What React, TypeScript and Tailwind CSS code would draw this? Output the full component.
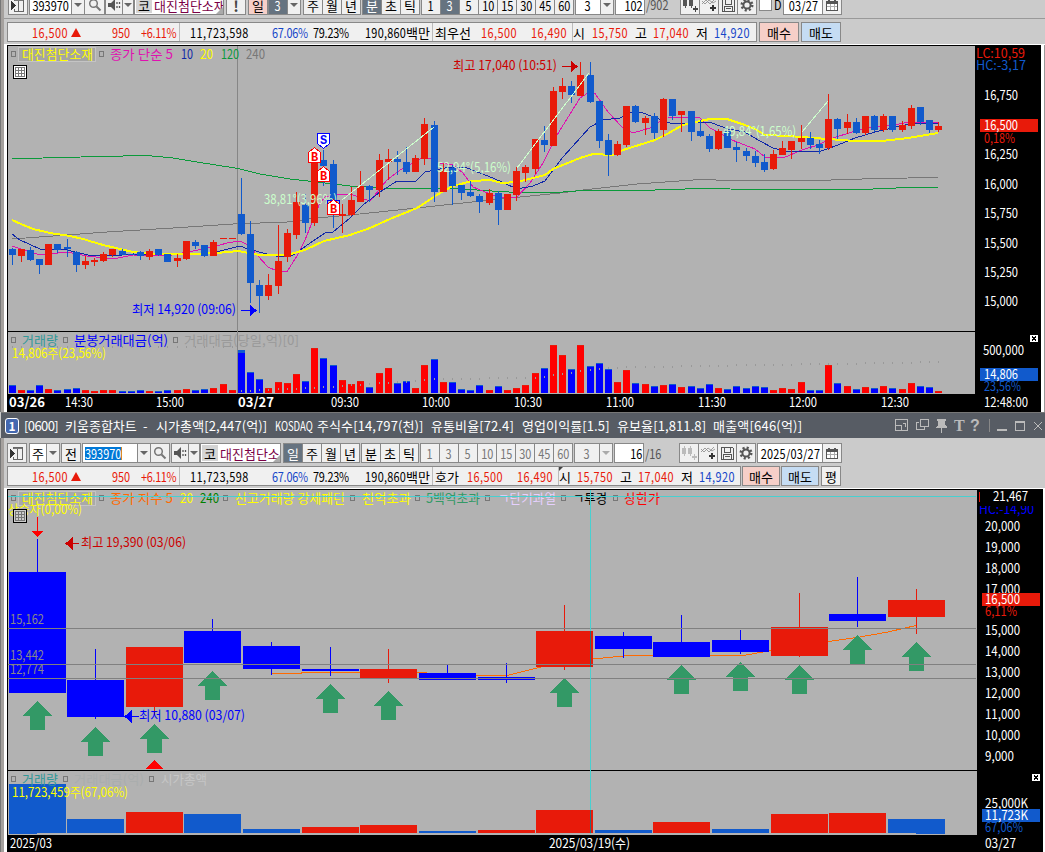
import type { ReactNode } from 'react';

type Tone = 'r' | 'b';
// x, high, open/close top, open/close bottom, low, tone, volume top
type Candle = [number, number, number, number, number, Tone, number];

const UP = '#e81a0a';
const DOWN = '#115acc';
const FONT = '"Noto Sans CJK KR", sans-serif';

const minuteCandles: Candle[] = [
  [9, 248, 249, 255, 265, 'b', 385], [18, 249, 249, 256, 262, 'r', 390], [27, 247, 250, 260, 261, 'b', 390],
  [36, 259, 259, 265, 274, 'b', 385], [45, 244, 244, 265, 265, 'r', 389], [54, 244, 244, 250, 253, 'b', 390],
  [64, 239, 247, 249, 257, 'b', 389], [73, 251, 252, 265, 272, 'b', 388], [82, 256, 261, 265, 269, 'r', 390],
  [91, 258, 260, 262, 266, 'r', 391], [100, 252, 254, 261, 262, 'r', 390], [109, 249, 249, 255, 257, 'r', 390],
  [119, 249, 251, 255, 255, 'b', 391], [128, 254, 254, 255, 255, 'b', 391], [137, 251, 252, 256, 260, 'b', 390],
  [146, 249, 251, 257, 260, 'r', 391], [155, 249, 249, 255, 256, 'b', 391], [164, 254, 254, 262, 262, 'b', 390],
  [174, 254, 258, 261, 267, 'r', 390], [183, 241, 241, 259, 260, 'r', 389], [192, 240, 242, 246, 249, 'b', 390],
  [201, 245, 245, 256, 257, 'b', 389], [210, 240, 242, 256, 256, 'r', 388], [220, 238, 238, 239, 239, 'r', 384],
  [229, 238, 238, 239, 239, 'r', 390], [238, 178, 214, 234, 235, 'b', 350], [247, 221, 234, 283, 303, 'b', 372],
  [256, 280, 285, 296, 313, 'b', 379], [265, 274, 285, 296, 300, 'r', 388], [275, 225, 261, 286, 294, 'r', 382],
  [284, 229, 233, 257, 262, 'r', 383], [293, 192, 202, 235, 239, 'r', 374], [302, 194, 205, 223, 233, 'b', 381],
  [311, 162, 162, 223, 226, 'r', 348], [320, 150, 160, 166, 186, 'b', 358], [330, 160, 164, 215, 228, 'b', 365],
  [339, 204, 214, 216, 233, 'r', 380], [348, 187, 200, 215, 216, 'r', 384], [357, 171, 186, 202, 202, 'r', 381],
  [366, 185, 186, 190, 202, 'b', 387], [376, 154, 160, 190, 197, 'r', 373], [385, 149, 159, 162, 180, 'r', 368],
  [394, 151, 159, 162, 175, 'b', 383], [403, 147, 162, 172, 174, 'b', 381], [412, 155, 158, 172, 172, 'r', 388],
  [421, 118, 124, 159, 165, 'r', 365], [431, 121, 125, 192, 202, 'b', 359], [440, 163, 171, 192, 192, 'r', 382],
  [449, 165, 168, 186, 205, 'b', 382], [458, 185, 185, 193, 200, 'b', 389], [467, 181, 192, 196, 197, 'b', 390],
  [476, 194, 196, 202, 213, 'b', 385], [486, 189, 193, 203, 205, 'r', 390], [495, 191, 193, 210, 225, 'b', 386],
  [504, 194, 194, 210, 210, 'r', 390], [513, 167, 171, 195, 201, 'r', 388], [522, 165, 167, 173, 182, 'r', 385],
  [532, 139, 139, 169, 174, 'r', 373], [541, 126, 140, 145, 152, 'b', 368], [550, 87, 91, 146, 146, 'r', 345],
  [559, 78, 86, 92, 99, 'r', 355], [568, 81, 86, 95, 103, 'b', 369], [577, 62, 75, 96, 96, 'r', 345],
  [587, 62, 75, 102, 103, 'b', 366], [596, 101, 101, 141, 148, 'b', 363], [605, 134, 140, 155, 176, 'b', 369],
  [614, 141, 144, 155, 156, 'r', 382], [623, 106, 106, 145, 147, 'r', 370], [632, 105, 106, 122, 123, 'b', 383],
  [642, 116, 118, 123, 135, 'r', 384], [651, 113, 116, 133, 139, 'b', 386], [660, 98, 99, 130, 137, 'r', 385],
  [669, 99, 99, 116, 120, 'b', 384], [678, 111, 111, 115, 132, 'r', 387], [688, 111, 111, 132, 141, 'b', 386],
  [697, 120, 131, 136, 137, 'b', 388], [706, 134, 136, 149, 152, 'b', 384], [715, 129, 131, 149, 150, 'r', 388],
  [724, 131, 131, 148, 148, 'b', 389], [733, 142, 147, 150, 162, 'b', 386], [743, 148, 151, 156, 161, 'b', 388],
  [752, 151, 156, 163, 167, 'b', 386], [761, 154, 162, 170, 172, 'b', 387], [770, 150, 154, 169, 170, 'r', 390],
  [779, 141, 148, 155, 155, 'r', 388], [788, 141, 141, 150, 159, 'r', 389], [798, 125, 138, 142, 149, 'r', 382],
  [807, 132, 138, 145, 149, 'b', 390], [816, 140, 144, 148, 154, 'b', 390], [825, 94, 119, 148, 150, 'r', 365],
  [834, 118, 119, 129, 139, 'b', 383], [844, 114, 122, 128, 134, 'r', 386], [853, 118, 122, 133, 134, 'b', 389],
  [862, 116, 116, 133, 135, 'r', 387], [871, 115, 116, 130, 132, 'b', 388], [880, 114, 116, 130, 132, 'r', 386],
  [889, 116, 116, 130, 132, 'b', 388], [899, 121, 125, 130, 132, 'r', 389], [908, 105, 108, 126, 129, 'r', 383],
  [917, 107, 107, 122, 125, 'b', 386], [926, 120, 120, 130, 133, 'b', 387], [935, 122, 126, 130, 132, 'r', 391],
];

const dayCandles: Candle[] = [
  [9, 539, 572, 693, 693, 'b', 784], [67, 649, 680, 717, 719, 'b', 819], [126, 647, 647, 707, 715, 'r', 812],
  [184, 619, 631, 663, 663, 'b', 814], [243, 642, 646, 669, 675, 'b', 829], [302, 647, 669, 671, 676, 'b', 827],
  [360, 649, 669, 678, 683, 'r', 825], [419, 665, 673, 680, 680, 'b', 831], [478, 663, 677, 680, 683, 'b', 830],
  [536, 605, 631, 667, 670, 'r', 810], [595, 632, 636, 649, 658, 'b', 830], [653, 615, 642, 657, 657, 'b', 822],
  [712, 630, 640, 652, 654, 'b', 829], [771, 593, 627, 656, 657, 'r', 814], [829, 577, 614, 621, 627, 'b', 813],
  [888, 589, 600, 617, 634, 'r', 819],
];
const dayUpVolumes = [126, 302, 360, 478, 536, 653, 771, 829];

const MA5 = '12,246 30,252 40,255 67,252 87,256 113,259 133,255 167,256 193,251 213,247 227,243 240,241 248,245 258,256 268,267 278,271.5 287,271.5 297,256 305,240 315,215 320,203 325,197 337,194 350,194 370,201 387,180 400,170 421,158.5 431,158.5 440,163 453,165 463,173 473,187 500,198 517,197 530,183 543,163 557,135 580,98 587,93.5 595,93.5 608,112 622,127 633,133 650,128 667,117 700,118 710,128 732,140 755,149 765,157 783,158 802,150 818,145 833,138 852,132 872,127 895,125 908,122 938,123';
const MA10 = '12,234 20,240 40,249 67,250 90,255.5 117,255.5 133,254 187,255 220,251 240,246 248,249 267,254 280,257 293,255 313,241 325,233 333,232 350,218 363,205 380,192 397,181 415,182 425,172 450,167 467,168 493,178 517,189 533,186 545,181 563,157 590,127 603,120 620,118 632,112 643,113 670,123 683,124 700,122 712,123 728,129 745,132 758,140 773,148 788,151.5 820,151.5 838,145 855,138 875,132 905,125 918,123.5 938,123.5';
const MA20 = '12,220 21,224 33,229 50,233 70,236 83,239 103,245 133,252 153,254 193,254 217,253 238,251 260,255 287,255 305,250 324,241 350,235 370,228 390,219 417,208 440,193 453,186 472,181 490,180 502,183 517,182 545,175 553,169 580,158 593,154 613,155 623,150 655,140 667,134 683,125 700,121 710,119 727,119 745,125 755,129 765,135 788,136 828,139 855,141 882,141 908,138 938,133';
const MA120 = '12,158.5 43,158 100,156.5 147,155.5 173,158 200,162.5 238,168.5 260,174 290,179 317,182 350,186 383,188 457,188.5 483,190.5 517,192.5 557,192.5 583,190.5 640,190.5 700,188.5 760,189.5 862,189.5 908,187.5 938,187.5';
const MA240 = '12,239 53,236 107,232 173,228 233,224 287,222 317,218 350,215 417,208 490,200 560,193 583,190 637,184 700,179.5 732,180.5 815,180.5 878,178.5 938,177.5';
const AMOUNT = [[238, 390], [311, 387], [350, 384], [400, 381], [431, 378], [532, 377], [559, 373], [577, 370], [600, 367], [642, 366], [700, 365], [825, 363], [938, 361]];

function amountY(x: number) {
  if (x < 238) return 346;
  const i = AMOUNT.findIndex((p) => p[0] >= x);
  if (i <= 0) return AMOUNT[0][1];
  const [x0, y0] = AMOUNT[i - 1];
  const [x1, y1] = AMOUNT[i];
  return Math.round(y0 + ((y1 - y0) * (x - x0)) / (x1 - x0));
}

// Chart text, fitted between x and x2 and centred on y
function Label({ x, x2, y, c = '#fff', bold, children }: { x: number; x2: number; y: number; c?: string; bold?: boolean; children: string }) {
  return (
    <text x={x} y={y + 4.5} fill={c} fontSize={13} fontWeight={bold ? 700 : 400} textLength={x2 - x} lengthAdjust="spacingAndGlyphs">
      {children}
    </text>
  );
}

function Dot({ x, y }: { x: number; y: number }) {
  return <rect x={x + 0.5} y={y - 2.5} width={4} height={5} fill="none" stroke="#777" />;
}

function GridIcon({ x, y, bg }: { x: number; y: number; bg: string }) {
  return (
    <g>
      <rect x={x + 0.5} y={y + 0.5} width={13} height={13} fill={bg} stroke="#000" />
      <path d={`M${x + 2.5} ${y + 2.5}h9v9h-9zM${x + 5.5} ${y + 2.5}v9M${x + 8.5} ${y + 2.5}v9M${x + 2.5} ${y + 5.5}h9M${x + 2.5} ${y + 8.5}h9`} fill="none" stroke="#777" />
    </g>
  );
}

function CloseIcon({ x, y }: { x: number; y: number }) {
  return (
    <g>
      <rect x={x} y={y} width={8} height={7} fill="#fff" />
      <path d={`M${x + 2} ${y + 1.5}l4 4M${x + 6} ${y + 1.5}l-4 4`} stroke="#000" />
    </g>
  );
}

function Trade({ x, y, kind }: { x: number; y: number; kind: 'B' | 'S' }) {
  const color = kind === 'B' ? '#f00' : '#00f';
  const d = kind === 'B' ? `M${x + 0.5} ${y + 15.5}v-10l6-5l6 5v10z` : `M${x + 0.5} ${y + 0.5}v10l6 5l6 -5v-10z`;
  return (
    <g>
      <path d={d} fill="#fff" stroke={color} />
      <text x={x + 6.5} y={kind === 'B' ? y + 13.5 : y + 11} fontSize={12} fontWeight={700} textAnchor="middle" fill={color} fontFamily="Liberation Mono">{kind}</text>
    </g>
  );
}

function MinuteChart() {
  const prices: [string, number][] = [
    ['16,750', 95.5], ['16,250', 154.5], ['16,000', 184], ['15,750', 213], ['15,500', 243], ['15,250', 272], ['15,000', 301],
  ];
  const times: [string, number][] = [
    ['14:30', 65], ['15:00', 156], ['09:30', 331], ['10:00', 422], ['10:30', 514], ['11:00', 606], ['11:30', 698], ['12:00', 789], ['12:30', 881],
  ];
  return (
    <svg width={1034} height={367} viewBox="7 45 1034 367" fontFamily={FONT} className="block shrink-0" shapeRendering="crispEdges">
      <rect x={7} y={45} width={1034} height={367} fill="#000" />
      <rect x={8} y={46} width={967} height={348} fill="#b2b2b2" />
      <rect x={8} y={331} width={967} height={1} fill="#000" />
      <rect x={237} y={46} width={1} height={348} fill="#868686" />

      <g fill="none" strokeWidth={1}>
        <polyline points={MA240} stroke="#777" />
        <polyline points={MA120} stroke="#0a9a3a" />
        <polyline points={MA5} stroke="#e010b0" />
        <polyline points={MA10} stroke="#1028a8" />
        <polyline points={MA20} stroke="#ff0" strokeWidth={2} />
      </g>
      {minuteCandles.map(([x, hi, top, bot, lo, t, vol]) => (
        <g key={x} fill={t === 'r' ? UP : DOWN}>
          <rect x={x + 3} y={hi} width={1} height={lo - hi} />
          <rect x={x} y={top} width={7} height={bot - top} />
          <rect x={x} y={vol} width={7} height={393 - vol} fill={t === 'r' ? '#f00' : '#00f'} />
          <rect x={x} y={vol} width={7} height={vol === 350 ? 3 : 1} />
        </g>
      ))}
      {minuteCandles.map(([x]) => (
        <rect key={x} x={x + 3} y={amountY(x)} width={1} height={2} fill="#999" />
      ))}
      <path d="M342 200L434 127M517 168L589 73M802 132L828 101" stroke="#ccffcc" fill="none" />

      <Label x={264} x2={337} y={199} c="#ccffcc">38,81°(3,96%)</Label>
      <Label x={437} x2={511} y={167} c="#ccffcc">52,94°(5,16%)</Label>
      <Label x={723} x2={796} y={131} c="#ccffcc">49,84°(1,65%)</Label>
      <Trade x={308} y={147} kind="B" />
      <Trade x={317} y={133} kind="S" />
      <Trade x={317} y={166} kind="B" />
      <rect x={327.5} y={200.5} width={12} height={12} fill="none" stroke="#00f" />
      <Trade x={327} y={199} kind="B" />

      <Dot x={11} y={54} />
      <rect x={18.5} y={47.5} width={77} height={14} fill="#a4a4a4" stroke="#c4c4c4" />
      <Label x={22} x2={93} y={54.5} c="#ff0">대진첨단소재</Label>
      <Dot x={99} y={54} />
      <Label x={110} x2={173} y={54.5} c="#e010b0">종가 단순 5</Label>
      <Label x={181} x2={193} y={54.5} c="#1028a8">10</Label>
      <Label x={200} x2={213} y={54.5} c="#ff0">20</Label>
      <Label x={221} x2={239} y={54.5} c="#0a9a3a">120</Label>
      <Label x={246} x2={265} y={54.5} c="#777">240</Label>
      <GridIcon x={13} y={65} bg="#fff" />
      <Label x={453} x2={557} y={65.5} c="#c00">최고 17,040 (10:51)</Label>
      <path d="M562 66.5h12M571 61.5v10l6-5z" stroke="#c00" fill="#c00" />
      <Label x={132} x2={236} y={309.5} c="#00f">최저 14,920 (09:06)</Label>
      <path d="M241 310.5h12M250 305.5v10l6-5z" stroke="#00f" fill="#00f" />

      <Dot x={11} y={340} />
      <Label x={22} x2={58} y={340} c="#399">거래량</Label>
      <Dot x={63} y={340} />
      <Label x={74} x2={168} y={340} c="#00f">분봉거래대금(억)</Label>
      <Dot x={173} y={340} />
      <Label x={184} x2={299} y={340} c="#999">거래대금(당일,억)[0]</Label>
      <Label x={12} x2={106} y={353} c="#ff0">14,806주(23,56%)</Label>

      <Label x={9} x2={45} y={402.5} bold>03/26</Label>
      <Label x={238} x2={274} y={402.5} bold>03/27</Label>
      {times.map(([t, x]) => <Label key={t} x={x} x2={x + 28} y={402.5}>{t}</Label>)}
      <Label x={984} x2={1028} y={402.5}>12:48:00</Label>

      <Label x={976} x2={1025} y={53} c={UP}>LC:10,59</Label>
      <Label x={976} x2={1026} y={65} c={DOWN}>HC:-3,17</Label>
      {prices.map(([p, y]) => <Label key={p} x={984} x2={1018} y={y}>{p}</Label>)}
      <rect x={980} y={119} width={58} height={13} fill={UP} />
      <Label x={984} x2={1018} y={125.5}>16,500</Label>
      <Label x={984} x2={1015} y={138} c={UP}>0,18%</Label>
      <CloseIcon x={1030} y={335} />
      <Label x={983} x2={1024} y={350}>500,000</Label>
      <rect x={980} y={368} width={58} height={13} fill={DOWN} />
      <Label x={984} x2={1018} y={374.5}>14,806</Label>
      <Label x={984} x2={1021} y={386.5} c={DOWN}>23,56%</Label>
    </svg>
  );
}

function DayChart() {
  const arrows = [[37, 701], [95, 727], [154, 724], [212, 671], [330, 684], [388, 691], [564, 678], [681, 665], [740, 662], [799, 665], [857, 635], [916, 642]];
  const prices: [string, number][] = [
    ['20,000', 526], ['19,000', 547], ['18,000', 568], ['17,000', 589], ['15,000', 630], ['14,000', 651],
    ['13,000', 672], ['12,000', 693], ['11,000', 714], ['10,000', 735],
  ];
  return (
    <svg width={1036} height={363} viewBox="7 489 1036 363" fontFamily={FONT} className="block shrink-0" shapeRendering="crispEdges">
      <rect x={7} y={489} width={1036} height={363} fill="#000" />
      <rect x={8} y={490} width={969} height={345} fill="#b2b2b2" />
      <rect x={8} y={770} width={969} height={1} fill="#000" />
      <polyline fill="none" stroke="#ff6a00" points="271,673.5 301,673.5 302,672.5 417,672.5 477,675.5 507,675.5 541,667 593,659 623,656 711,655.5 743,655.5 769,651 828,641.5 857,637.5 888,632 916,625.5" />
      {dayCandles.map(([x, hi, top, bot, lo, t, vol]) => (
        <g key={x} fill={t === 'r' ? UP : '#00f'}>
          <rect x={x + 28} y={hi} width={1} height={lo - hi} />
          <rect x={x} y={top} width={57} height={bot - top} />
          <rect x={x} y={vol} width={57} height={833 - vol} fill={dayUpVolumes.includes(x) ? UP : DOWN} />
        </g>
      ))}
      <rect x={9} y={833} width={28} height={1} fill={DOWN} />
      <rect x={916} y={833} width={29} height={1} fill={DOWN} />
      {arrows.map(([cx, y]) => (
        <path key={cx} d={`M${cx + 0.5} ${y}l14.5 15h-7v14h-15v-14h-7z`} fill="#339966" />
      ))}
      <path d="M154.500 760l9 9h-18z" fill="#f00" />
      <path d="M37 517h1v14h5l-5.500 6l-5.500-6h5z" fill="#f00" />
      <path d="M8 628.5h968M8 664.5h968M8 678.5h968" stroke="#808080" />
      <Label x={10} x2={44} y={619.5} c="#888">15,162</Label>
      <Label x={10} x2={44} y={655.5} c="#888">13,442</Label>
      <Label x={10} x2={44} y={669.5} c="#888">12,774</Label>

      <path d="M70 543.500h9M72 538.500v10l-6-5z" stroke="#c00" fill="#c00" />
      <Label x={81} x2={186} y={542.5} c="#c00">최고 19,390 (03/06)</Label>
      <path d="M129 716.500h10M131 711.500v10l-6-5z" stroke="#00f" fill="#00f" />
      <Label x={139} x2={245} y={715.5} c="#00f">최저 10,880 (03/07)</Label>

      <rect x={18.5} y={491.5} width={77} height={14} fill="#a9a9a9" stroke="#c4c4c4" />
      {[11, 99, 223, 350, 415, 485, 561, 613].map((x) => <Dot key={x} x={x} y={498} />)}
      <Label x={22} x2={93} y={498.5} c="#ff0">대진첨단소재</Label>
      <Label x={110} x2={173} y={498.5} c="#ff6a00">종가 지수 5</Label>
      <Label x={180} x2={193} y={498.5} c="#ff0">20</Label>
      <Label x={200} x2={219} y={498.5} c="#008000">240</Label>
      <Label x={235} x2={345} y={498.5} c="#ff0">신고거래량 강세패턴</Label>
      <Label x={362} x2={411} y={498.5} c="#ff0">천억초과</Label>
      <Label x={426} x2={480} y={498.5} c="#339966">5백억초과</Label>
      <Label x={498} x2={556} y={498.5} c="#e6d0ff">ㄱ단기과열</Label>
      <Label x={573} x2={607} y={498.5} c="#000">ㄱ투경</Label>
      <Label x={624} x2={660} y={498.5} c="#f00">상한가</Label>
      <Label x={8} x2={82} y={509.5} c="#ff0">상승자(0,00%)</Label>
      <GridIcon x={13} y={509} bg="#ccc" />

      <path d="M8 496.500h968M590.500 490v344" stroke="#48d0d0" />
      <path d="M590.500 631v36M590.500 810v23" stroke="#2d6f78" />

      {[11, 63, 149].map((x) => <Dot key={x} x={x} y={779} />)}
      <Label x={22} x2={58} y={779} c="#399">거래량</Label>
      <Label x={74} x2={144} y={779} c="#a9adad">거래대금(억)</Label>
      <Label x={161} x2={207} y={779} c="#c6c6c6">시가총액</Label>
      <Label x={12} x2={128} y={792} c="#ff0">11,723,459주(67,06%)</Label>

      <Label x={10} x2={52} y={843}>2025/03</Label>
      <Label x={549} x2={630} y={843}>2025/03/19(수)</Label>
      <Label x={985} x2={1016} y={843}>03/27</Label>

      <path d="M979.500 492v10h2" stroke={UP} fill="none" />
      <Label x={993} x2={1028} y={496.500}>21,467</Label>
      <Label x={979} x2={1034} y={509.500} c="#00f">HC:-14,90</Label>
      <rect x={979} y={502} width={62} height={4} fill="#000" />
      {prices.map(([p, y]) => <Label key={p} x={985} x2={1020} y={y}>{p}</Label>)}
      <Label x={985} x2={1014} y={756}>9,000</Label>
      <rect x={982} y={593} width={58} height={13} fill={UP} />
      <Label x={985} x2={1020} y={599.5}>16,500</Label>
      <Label x={985} x2={1017} y={611} c={UP}>6,11%</Label>
      <CloseIcon x={1032} y={774} />
      <Label x={985} x2={1028} y={803}>25,000K</Label>
      <rect x={982} y={809} width={58} height={13} fill={DOWN} />
      <Label x={985} x2={1028} y={815.5}>11,723K</Label>
      <Label x={985} x2={1023} y={827.5} c={DOWN}>67,06%</Label>
    </svg>
  );
}

function Btn({ className = 'w-5 -ml-px', tone = 'bg-[#f0f0f0] text-black', children }: { className?: string; tone?: string; children?: ReactNode }) {
  return (
    <div className={`flex h-5 shrink-0 items-center justify-center overflow-hidden border border-[#888] whitespace-nowrap ${tone} ${className}`}>
      {children}
    </div>
  );
}

// Condensed digits for the narrow toolbar fields
function Num({ className = 'origin-center', children }: { className?: string; children: ReactNode }) {
  return <span className={`inline-block shrink-0 scale-x-[0.84] ${className}`}>{children}</span>;
}

function Caret({ className = 'w-3.5 -ml-px', dim }: { className?: string; dim?: boolean }) {
  return (
    <Btn className={className}>
      <svg width="8" height="4" viewBox="0 0 8 4" className="shrink-0"><path d="M0 0h8L4 4z" fill={dim ? '#aaa' : '#666'} /></svg>
    </Btn>
  );
}

const PanelIcon = () => (
  <svg width="16" height="15" viewBox="0 0 16 15" className="shrink-0" shapeRendering="crispEdges">
    <path d="M4.500 3V1.500h9v12h-9V11M8.500 2v11" fill="none" stroke="#666" />
    <path d="M5 2h8v1H5z" fill="#777" />
    <path d="M1 3v9l5-4.500z" fill="#333" />
  </svg>
);
const SearchIcon = () => (
  <svg width="14" height="14" viewBox="0 0 14 14"><circle cx="5.500" cy="5.500" r="3.800" fill="none" stroke="#777" strokeWidth="1.500" /><path d="M8.500 8.500l4 4" stroke="#777" strokeWidth="2" /></svg>
);
const SpeakerIcon = () => (
  <svg width="13" height="12" viewBox="0 0 13 12"><path d="M0 4h3l4-4v12L3 8H0z" fill="#555" /><path d="M9 3v2M9 7v2M11.500 3v2M11.500 7v2" stroke="#555" strokeWidth="1.300" /></svg>
);
const CandleIcon = ({ dim }: { dim?: boolean }) => (
  <svg width="16" height="15" viewBox="0 0 16 15" shapeRendering="crispEdges">
    <path d="M1 2h4v6H1zM7 2h4v6H7zM2.500 0h1v10h-1zM8.500 0h1v10h-1z" fill={dim ? '#bbb' : '#555'} />
    <path d="M11 10h5v2h-5zM13 8h1v6h-1z" fill={dim ? '#bbb' : '#444'} />
  </svg>
);
const WaveIcon = () => (
  <svg width="17" height="16" viewBox="0 0 17 16">
    <path d="M1 7l4-4 4 4 5-5M1 4l3 3 4-4 4 3 3-2" stroke="#888" strokeWidth=".8" fill="none" />
    <path d="M9 11h6M12 8v6" stroke="#333" strokeWidth="2" />
  </svg>
);
const SaveIcon = () => (
  <svg width="15" height="15" viewBox="0 0 15 15" shapeRendering="crispEdges">
    <path d="M1.500 1.500h11l1 1v11h-12zM4.500 2v4h6V2M3.500 13V8.500h8V13M5 10.500h5" stroke="#555" strokeWidth="1" fill="none" />
  </svg>
);
const GearIcon = () => (
  <svg width="14" height="14" viewBox="0 0 14 14">
    <circle cx="7" cy="7" r="5.300" fill="none" stroke="#555" strokeWidth="2.400" strokeDasharray="2.100 2.060" />
    <circle cx="7" cy="7" r="3.600" fill="none" stroke="#555" strokeWidth="2" />
  </svg>
);
const CalendarIcon = () => (
  <svg width="12" height="11" viewBox="0 0 12 11" shapeRendering="crispEdges">
    <path d="M.5 1.500h11v9H.5z" stroke="#555" fill="#fff" />
    <path d="M4.500 4v6M8.500 4v6M1 6.500h10" stroke="#aaa" fill="none" />
    <path d="M0 1h12v3H0zM2 0h2v1H2zM8 0h2v1H8z" fill="#555" />
  </svg>
);

const DARK = 'bg-[#667380] text-white';
const WHITE = 'bg-white text-black';
const GRAY = 'bg-[#f0f0f0] text-[#777]';
const minutes = ['1', '3', '5', '10', '15', '30', '45', '60'];

function StockName({ className, children }: { className: string; children: string }) {
  return (
    <Btn className={className} tone="bg-white text-[#7a0045]">
      <div className="relative flex h-full w-full items-center overflow-hidden">
        <span className="ml-px flex h-4 w-4 shrink-0 items-center justify-center bg-[#d4d4d4] text-black">코</span>
        <span className="ml-0.5">{children}</span>
        <svg width="7" height="7" className="absolute right-0 bottom-0"><path d="M7 0v7H0z" fill="#aaa" /></svg>
      </div>
    </Btn>
  );
}

function TopToolbar() {
  return (
    <div className="flex h-[15px] items-end overflow-hidden pl-1">
      <Btn className="w-5"><PanelIcon /></Btn>
      <Btn className="ml-px w-[43px]" tone={WHITE}><Num>393970</Num></Btn>
      <Caret />
      <Btn className="-ml-px w-[21px]"><SearchIcon /></Btn>
      <Btn className="w-[18px]"><SpeakerIcon /></Btn>
      <Caret className="-ml-px w-3" />
      <StockName className="w-[90px]">대진첨단소재</StockName>
      <Btn className="ml-0.5 w-5 text-[15px] font-bold" tone="bg-[#f0f0f0] text-[#444]">!</Btn>
      <Btn className="ml-0.5 w-5" tone="bg-[#f6cfc8] text-black">일</Btn>
      <Btn className="w-5" tone={DARK}><Num>3</Num></Btn>
      <Caret />
      <Btn className="ml-0.5 w-5">주</Btn>
      <Btn>월</Btn>
      <Btn>년</Btn>
      <Btn className="ml-px w-5" tone={DARK}>분</Btn>
      <Btn>초</Btn>
      <Btn>틱</Btn>
      {minutes.map((m, i) => (
        <Btn key={m} className={i === 0 ? 'ml-px w-5' : '-ml-px w-5'} tone={m === '3' ? DARK : undefined}><Num>{m}</Num></Btn>
      ))}
      <Btn className="ml-px w-[26px]" tone={WHITE}><Num>3</Num></Btn>
      <Caret />
      <Btn className="ml-px w-[30px] justify-end pr-px" tone={WHITE}><Num className="origin-right">102</Num></Btn>
      <span className="w-[26px] pl-px leading-5 text-[#555]"><Num className="origin-left">/902</Num></span>
      <Btn className="ml-[9px] w-5"><CandleIcon /></Btn>
      <Btn><WaveIcon /></Btn>
      <Btn><SaveIcon /></Btn>
      <Btn><GearIcon /></Btn>
      <div className="mb-1 ml-0.5 h-[13px] w-[13px] border border-[#888] bg-white" />
      <span className="ml-0.5 w-2 leading-5"><Num className="origin-left">D</Num></span>
      <Btn className="ml-px w-10" tone={WHITE}><Num className="origin-center tracking-[0.2px]">03/27</Num></Btn>
      <Btn><CalendarIcon /></Btn>
    </div>
  );
}

function DayToolbar() {
  return (
    <div className="flex h-5 items-center pl-[3px]">
      <Btn className="w-5"><PanelIcon /></Btn>
      <Btn className="ml-0.5 w-[18px]" tone={WHITE}>주</Btn>
      <Caret />
      <Btn className="ml-px w-5">전</Btn>
      <Btn className="ml-px w-14 justify-start pl-0.5" tone={WHITE}>
        <Num className="origin-left border-r border-orange-400 bg-[#0078d7] text-white">393970</Num>
      </Btn>
      <Caret />
      <Btn><SearchIcon /></Btn>
      <Btn className="ml-px w-[18px]"><SpeakerIcon /></Btn>
      <Caret className="-ml-px w-3" />
      <StockName className="w-[81px]">대진첨단소</StockName>
      <Btn className="ml-0.5 w-5" tone={DARK}>일</Btn>
      <Btn>주</Btn>
      <Btn>월</Btn>
      <Btn>년</Btn>
      <Btn className="ml-px w-5">분</Btn>
      <Btn>초</Btn>
      <Btn>틱</Btn>
      {minutes.map((m, i) => (
        <Btn key={m} className={i === 0 ? 'ml-px w-5' : '-ml-px w-5'} tone={GRAY}><Num>{m}</Num></Btn>
      ))}
      <Btn className="ml-px w-[26px]" tone={GRAY}><Num>3</Num></Btn>
      <Caret dim />
      <Btn className="ml-px w-[30px] justify-end pr-px" tone={WHITE}><Num className="origin-right">16</Num></Btn>
      <span className="w-5 pl-px text-[#555]"><Num className="origin-left">/16</Num></span>
      <Btn className="ml-[15px] w-5"><CandleIcon dim /></Btn>
      <Btn><WaveIcon /></Btn>
      <Btn><SaveIcon /></Btn>
      <Btn><GearIcon /></Btn>
      <Btn className="ml-px w-[66px]" tone={WHITE}><Num className="origin-center tracking-[0.3px]">2025/03/27</Num></Btn>
      <Btn><CalendarIcon /></Btn>
    </div>
  );
}

// Shared left part of the quote strip, up to the traded amount
function QuoteBase() {
  return (
    <>
      <span className="ml-6 w-9 text-[#e81a0a]"><Num className="origin-left tracking-[0.5px]">16,500</Num></span>
      <svg width="10" height="9" className="ml-[3px] shrink-0"><path d="M5 0l5 9H0z" fill="#e81a0a" /></svg>
      <span className="ml-[31px] w-[29px] text-[#e81a0a]"><Num className="origin-left">950</Num></span>
      <span className="w-[38px] text-[#e81a0a]"><Num className="origin-left tracking-[-0.4px]">+6.11%</Num></span>
      <span className="h-full w-px bg-[#bbb]" />
      <span className="ml-2.5 w-[82px]"><Num className="origin-left tracking-[0.5px]">11,723,598</Num></span>
      <span className="w-[41px] text-[#1646c8]"><Num className="origin-left tracking-[-0.3px]">67.06%</Num></span>
      <span className="w-[52px]"><Num className="origin-left tracking-[-0.3px]">79.23%</Num></span>
      <span className="w-[41px]"><Num className="origin-left tracking-[0.3px]">190,860</Num></span>
      <span className="w-[26px]">백만</span>
      <span className="h-full w-px bg-[#bbb]" />
    </>
  );
}

function Price({ className = 'w-[43px] text-[#e81a0a]', children }: { className?: string; children: string }) {
  return (
    <span className={className}>
      <Num className="origin-left tracking-[0.5px]">{children}</Num>
    </span>
  );
}

function TopQuote() {
  return (
    <div className="mt-[3px] flex h-5 pl-[3px]">
      <div className="flex w-[750px] items-center overflow-hidden border border-[#888] bg-[#f0f0f0] whitespace-nowrap *:shrink-0">
        <QuoteBase />
        <span className="ml-0.5 w-[46px]">최우선</span>
        <Price className="w-[50px] text-[#e81a0a]">16,500</Price>
        <Price className="w-[41px] text-[#e81a0a]">16,490</Price>
        <span className="h-full w-px bg-[#bbb]" />
        <span className="w-[19px]">시</span>
        <Price>15,750</Price>
        <span className="w-[18px]">고</span>
        <Price>17,040</Price>
        <span className="w-[18px]">저</span>
        <Price className="text-[#1646c8]">14,920</Price>
      </div>
      <Btn className="ml-0.5 w-10" tone="bg-[#f6cfc8]">매수</Btn>
      <Btn className="ml-0.5 w-10" tone="bg-[#c5dcf3]">매도</Btn>
    </div>
  );
}

function DayQuote() {
  return (
    <div className="mt-[3px] flex h-5 pl-[3px]">
      <div className="flex w-[734px] items-center overflow-hidden border border-[#888] bg-[#f0f0f0] whitespace-nowrap *:shrink-0">
        <QuoteBase />
        <span className="ml-0.5 w-8">호가</span>
        <Price className="w-[50px] text-[#e81a0a]">16,500</Price>
        <Price className="w-[41px] text-[#e81a0a]">16,490</Price>
        <span className="h-full w-px bg-[#bbb]" />
        <span className="relative w-[18px]">
          시
          <svg width="5" height="5" className="absolute -top-1 left-0"><path d="M0 0h5L0 5z" fill="#444" /></svg>
        </span>
        <Price>15,750</Price>
        <span className="w-[18px]">고</span>
        <Price>17,040</Price>
        <span className="w-[18px]">저</span>
        <Price className="text-[#1646c8]">14,920</Price>
      </div>
      <Btn className="ml-px w-[38px]" tone="bg-[#f6cfc8]">매수</Btn>
      <Btn className="ml-px w-[38px]" tone="bg-[#c5dcf3]">매도</Btn>
      <Btn className="ml-0.5 w-5">평</Btn>
    </div>
  );
}

function TitleBar() {
  return (
    <div className="ml-px flex h-[26px] items-center border-t border-[#777] bg-[#575c64] text-white">
      <span className="ml-1 flex h-4 w-3.5 items-center justify-center rounded-[3px] border border-white bg-[#4468b0] text-[12px] font-bold">1</span>
      <div className="ml-[5px] flex whitespace-nowrap *:shrink-0">
        <span className="w-[41px] tracking-[-0.6px]">[0600]</span>
        <span className="w-[78px]">키움종합차트</span>
        <span className="w-[13px]">-</span>
        <span className="w-[119px] tracking-[0.1px]">시가총액[2,447(억)]</span>
        <span className="w-[42px]"><span className="inline-block origin-left scale-x-[0.73]">KOSDAQ</span></span>
        <span className="w-[114px] tracking-[0.1px]">주식수[14,797(천)]</span>
        <span className="w-[91px] tracking-[0.1px]">유통비율[72.4]</span>
        <span className="w-[95px] tracking-[0.1px]">영업이익률[1.5]</span>
        <span className="w-[96px] tracking-[0.1px]">유보율[1,811.8]</span>
        <span className="tracking-[0.2px]">매출액[646(억)]</span>
      </div>
      <svg width="150" height="16" viewBox="895 418 150 16" className="ml-auto shrink-0" fill="none" stroke="#bbb" shapeRendering="crispEdges">
        <path d="M896 419.500h11.500v11H895.500v-11zM895.500 425.500h6v5M903 423.500h2v3" />
        <path d="M920.500 419.500h8v7h-8zM919 422.500h-2.500v7h8V427" />
        <path d="M937 419h9v2h-1v4l2 2v1h-11v-1l2-2v-4h-1zM941 428h1v5h-1z" fill="#bbb" stroke="none" />
        <text x="954" y="431" fontSize="16" fontWeight="700" fontFamily="Liberation Serif" fill="#bbb" stroke="none">T</text>
        <text x="970" y="431" fontSize="16" fontWeight="700" fontFamily="Liberation Sans" fill="#bbb" stroke="none">?</text>
        <path d="M989.500 419v13" stroke="#888" />
        <path d="M997 429h10v2h-10z" fill="#bbb" stroke="none" />
        <path d="M1015.500 421.500h9v9h-9zM1015 422.500h10" />
        <path d="M1034 422l8 8M1042 422l-8 8" shapeRendering="auto" />
      </svg>
    </div>
  );
}

export default function App() {
  return (
    <div className="h-[852px] w-[1045px] overflow-hidden bg-[#cbcbcb] font-['Noto_Sans_CJK_KR',sans-serif] text-[13px] leading-none text-black">
      <section className="flex h-[412px]">
        <div className="w-1 border-l border-[#777] bg-[#a5a19e]" />
        <div className="flex w-[1041px] flex-col">
          <TopToolbar />
          <div className="mt-[3px] border-t border-[#999]" />
          <TopQuote />
          <div className="mt-0.5 flex border-t border-white bg-white pl-[3px]">
            <MinuteChart />
            <div className="ml-[3px] w-px bg-[#999]" />
          </div>
        </div>
      </section>
      <TitleBar />
      <section className="flex h-[414px]">
        <div className="w-1 border-l border-[#777] bg-[#a5a19e]" />
        <div className="flex w-[1041px] flex-col pt-[5px]">
          <DayToolbar />
          <DayQuote />
          <div className="mt-0.5 flex border-t border-white bg-white pl-[3px]">
            <DayChart />
          </div>
        </div>
      </section>
    </div>
  );
}
